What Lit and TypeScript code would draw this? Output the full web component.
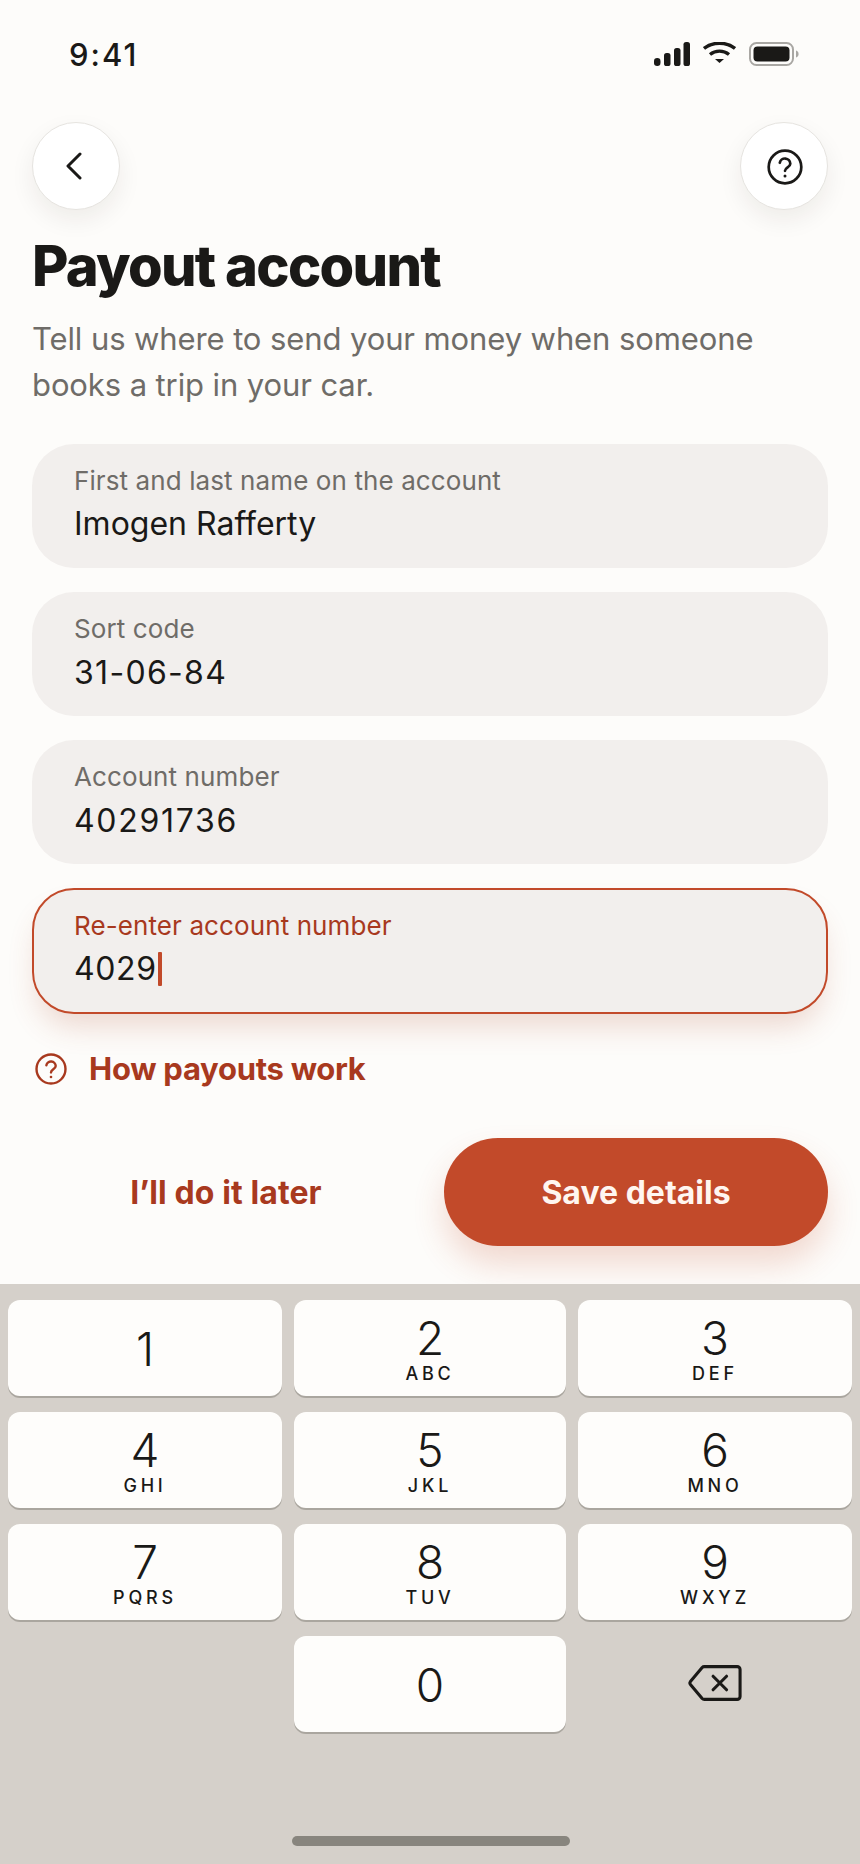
import { LitElement, html, css } from 'lit';
import { customElement } from 'lit/decorators.js';

const fields = [
  { label: 'First and last name on the account', value: 'Imogen Rafferty', cls: '' },
  { label: 'Sort code', value: '31-06-84', cls: 'code' },
  { label: 'Account number', value: '40291736', cls: 'acct' },
];

const keys = [
  ['1', ''],
  ['2', 'ABC'],
  ['3', 'DEF'],
  ['4', 'GHI'],
  ['5', 'JKL'],
  ['6', 'MNO'],
  ['7', 'PQRS'],
  ['8', 'TUV'],
  ['9', 'WXYZ'],
];

const helpIcon = html`
  <svg viewBox="0 0 36 36" fill="none" stroke="currentColor" stroke-width="2.7" stroke-linecap="round" stroke-linejoin="round">
    <circle cx="18" cy="18" r="16.3"></circle>
    <path d="M12.800 13.800a5.300 5.300 0 0 1 10.500 .9c0 3.500-5.300 3.800-5.300 7.100"></path>
    <circle cx="18" cy="27" r="1.500" fill="currentColor" stroke="none"></circle>
  </svg>
`;

@customElement('app-root')
export class AppRoot extends LitElement {
  static styles = css`
    :host {
      display: block;
      font-family: Inter, 'Noto Sans', sans-serif;
      color: #1a1917;
    }

    .screen {
      width: 860px;
      height: 1864px;
      background: #fdfcfa;
      display: flex;
      flex-direction: column;
      overflow: hidden;
    }

    .status {
      height: 122px;
      box-sizing: border-box;
      padding: 37px 61px 0 69px;
      display: flex;
      justify-content: space-between;
      align-items: flex-start;
    }

    .time {
      font-size: 31px;
      line-height: 36px;
      font-weight: 500;
      letter-spacing: 2px;
    }

    .status-icons {
      display: flex;
      align-items: flex-start;
      gap: 13px;
      padding-top: 5px;
    }

    .status-icons svg {
      display: block;
    }

    .content {
      flex: 1;
      padding: 0 32px;
      display: flex;
      flex-direction: column;
    }

    .nav {
      display: flex;
      justify-content: space-between;
    }

    .round {
      width: 88px;
      height: 88px;
      box-sizing: border-box;
      border-radius: 50%;
      background: #fff;
      border: 1.5px solid #e6e4e0;
      box-shadow: 0 10px 24px rgba(40, 30, 20, 0.07);
      display: flex;
      align-items: center;
      justify-content: center;
    }

    .round svg {
      display: block;
    }

    .back-icon {
      margin-right: 4px;
    }

    .help-icon {
      width: 36px;
      height: 36px;
      margin-top: 1px;
      margin-left: 1px;
    }

    h1 {
      margin: 24px 0 0;
      font-size: 56px;
      line-height: 64px;
      font-weight: 800;
      letter-spacing: -1.7px;
    }

    .sub {
      margin: 18px 0 0;
      font-size: 31px;
      line-height: 46px;
      color: #6f6c68;
      letter-spacing: -0.1px;
    }

    .fields {
      margin-top: 36px;
      display: flex;
      flex-direction: column;
      gap: 24px;
    }

    .field {
      height: 124px;
      box-sizing: border-box;
      padding: 20px 41px 0;
      border-radius: 42px;
      background: #f2efed;
      border: 1px solid transparent;
    }

    .field.focus {
      height: 126px;
      border: 2px solid #c24a2a;
      padding-left: 40px;
      box-shadow: 0 18px 30px -6px rgba(170, 70, 40, 0.2);
    }

    .label {
      font-size: 26px;
      line-height: 32px;
      letter-spacing: 0.1px;
      color: #6f6c68;
    }

    .focus .label {
      color: #a8391e;
    }

    .value {
      margin-top: 5px;
      font-size: 32px;
      line-height: 44px;
      display: flex;
      align-items: center;
    }

    .value.code {
      letter-spacing: 1.3px;
      margin-top: 6px;
    }

    .value.acct {
      letter-spacing: 1.7px;
      margin-top: 6px;
    }

    .value.typed {
      letter-spacing: 0.6px;
    }

    .caret {
      width: 4px;
      height: 34px;
      margin-left: 1px;
      border-radius: 1px;
      background: #c24a2a;
    }

    .link {
      margin-top: 28px;
      display: flex;
      align-items: center;
      gap: 22px;
      padding-left: 3px;
      color: #a8391e;
      font-size: 31px;
      line-height: 54px;
      font-weight: 700;
      letter-spacing: -0.28px;
    }

    .link svg {
      width: 32px;
      height: 32px;
    }

    .actions {
      margin-top: 42px;
      display: flex;
      align-items: center;
    }

    .later {
      flex: 1;
      padding-right: 24px;
      text-align: center;
      color: #a8391e;
      font-size: 32px;
      font-weight: 700;
      letter-spacing: 0.1px;
    }

    .save {
      width: 384px;
      height: 108px;
      border-radius: 54px;
      background: #c24a2a;
      color: #fff6f0;
      font-size: 32px;
      font-weight: 700;
      display: flex;
      align-items: center;
      justify-content: center;
      box-shadow: 0 18px 32px rgba(194, 74, 42, 0.2);
    }

    .keyboard {
      height: 580px;
      box-sizing: border-box;
      background: #d5d0ca;
      padding: 16px 8px 0;
      position: relative;
    }

    .keys {
      display: grid;
      grid-template-columns: 274px 272px 274px;
      grid-auto-rows: 96px;
      column-gap: 12px;
      row-gap: 16px;
    }

    .key {
      box-sizing: border-box;
      padding-top: 2px;
      background: #fefdfb;
      border-radius: 12px;
      box-shadow: 0 2px 0 #aaa69f;
      display: flex;
      flex-direction: column;
      align-items: center;
      justify-content: center;
    }

    .digit {
      font-size: 46px;
      line-height: 44px;
      font-weight: 350;
    }

    .letters {
      margin-top: 4px;
      font-size: 18px;
      line-height: 20px;
      font-weight: 500;
      letter-spacing: 3.8px;
    }

    .key.has-letters {
      padding-top: 3px;
    }

    .bare {
      display: flex;
      align-items: center;
      justify-content: center;
      padding-bottom: 2px;
    }

    .home {
      position: absolute;
      left: 292px;
      bottom: 18px;
      width: 278px;
      height: 10px;
      border-radius: 5px;
      background: #88857e;
    }
  `;

  render() {
    return html`
      <div class="screen">
        <div class="status">
          <div class="time">9:41</div>
          <div class="status-icons">
            <svg width="36" height="24" viewBox="0 0 36 24" fill="#1a1917">
              <rect x="0" y="16" width="6.500" height="8" rx="3.200"></rect>
              <rect x="10" y="11" width="6.500" height="13" rx="2.600"></rect>
              <rect x="20" y="6" width="6.500" height="18" rx="2.600"></rect>
              <rect x="29.500" y="0" width="6.500" height="24" rx="2.600"></rect>
            </svg>
            <svg width="33" height="22" viewBox="0 0 33 22" fill="none" stroke="#1a1917" stroke-width="3.400">
              <path d="M1 6.500C9.500 -0.500 23.500 -0.500 32 6.500"></path>
              <path d="M7 12.500C12.500 8 20.500 8 26 12.500"></path>
              <path d="M12 17h9l-4.500 4z" fill="#1a1917" stroke="none"></path>
            </svg>
            <svg width="50" height="24" viewBox="0 0 50 24" fill="none">
              <rect x="1" y="1" width="43" height="22" rx="6.500" stroke="#a9a7a3" stroke-width="2"></rect>
              <rect x="4.500" y="4.500" width="36" height="15" rx="4" fill="#1a1917"></rect>
              <path d="M47 8.500c1.600.5 2.600 1.800 2.600 3.500S48.600 15 47 15.500z" fill="#a9a7a3"></path>
            </svg>
          </div>
        </div>
        <div class="content">
          <div class="nav">
            <div class="round">
              <svg class="back-icon" width="18" height="28" viewBox="0 0 18 28" fill="none" stroke="#1a1917" stroke-width="3" stroke-linecap="round" stroke-linejoin="round">
                <path d="M15 2 3 14l12 12"></path>
              </svg>
            </div>
            <div class="round"><span class="help-icon">${helpIcon}</span></div>
          </div>
          <h1>Payout account</h1>
          <p class="sub">Tell us where to send your money when someone books a trip in your car.</p>
          <div class="fields">
            ${fields.map(
              (f) => html`
                <div class="field">
                  <div class="label">${f.label}</div>
                  <div class="value ${f.cls}">${f.value}</div>
                </div>
              `
            )}
            <div class="field focus">
              <div class="label">Re-enter account number</div>
              <div class="value typed">4029<span class="caret"></span></div>
            </div>
          </div>
          <div class="link">${helpIcon}<span>How payouts work</span></div>
          <div class="actions">
            <div class="later">I’ll do it later</div>
            <div class="save">Save details</div>
          </div>
        </div>
        <div class="keyboard">
          <div class="keys">
            ${keys.map(
              ([d, l]) => html`
                <div class="key ${l ? 'has-letters' : ''}">
                  <div class="digit">${d}</div>
                  ${l ? html`<div class="letters">${l}</div>` : ''}
                </div>
              `
            )}
            <div></div>
            <div class="key"><div class="digit">0</div></div>
            <div class="bare">
              <svg width="54" height="38" viewBox="0 0 56 38" fill="none" stroke="#1a1917" stroke-width="3.200" stroke-linecap="round" stroke-linejoin="round">
                <path d="M17 2h34a3 3 0 0 1 3 3v28a3 3 0 0 1-3 3H17a3 3 0 0 1-2.300-1L2.500 20.500a2.500 2.500 0 0 1 0-3L14.700 3a3 3 0 0 1 2.300-1z"></path>
                <path d="m26 12 14 14M40 12 26 26"></path>
              </svg>
            </div>
          </div>
          <div class="home"></div>
        </div>
      </div>
    `;
  }
}

declare global {
  interface HTMLElementTagNameMap {
    'app-root': AppRoot;
  }
}
